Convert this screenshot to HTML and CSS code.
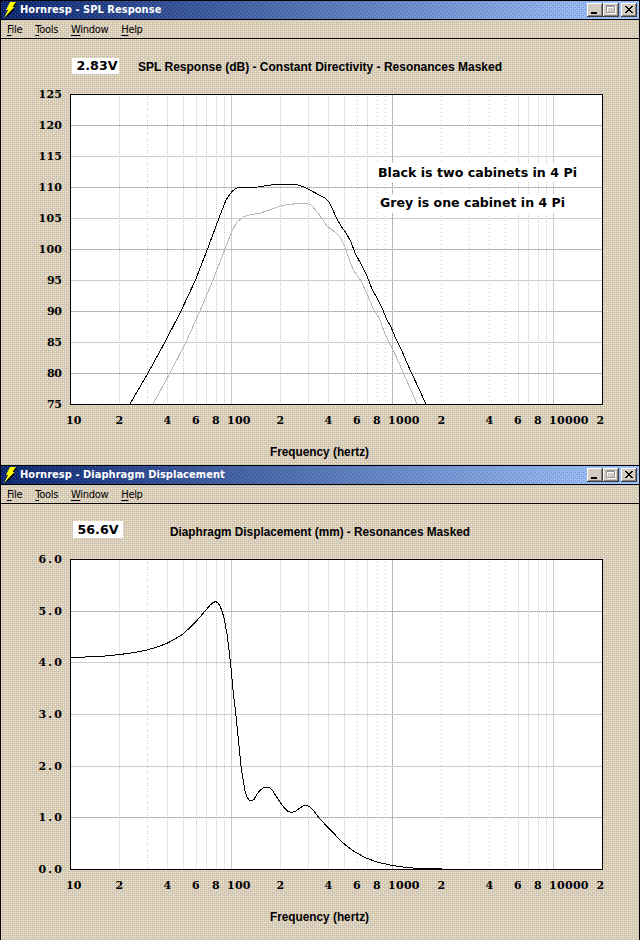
FILE: index.html
```html
<!DOCTYPE html>
<html lang="en">
<head>
    <meta charset="UTF-8">
    <title>Hornresp</title>
    <link rel="stylesheet" href="styles.css">
</head>
<body>
    <div class="window">
        <div class="titlebar">
            <svg class="bolt" width="14" height="16" viewBox="0 0 14 16">
                <path d="M7 1h6l-4 6h2L2 16l3-7H3z" fill="#000"/>
                <path d="M6 0h6L8.500 5h2L0 16l4-8H2z" fill="#ff0"/>
            </svg>
            <span class="caption">Hornresp - SPL Response</span>
            <div class="controls">
                <div class="btn"><svg width="16" height="14"><path d="M4 9h6v2H4z"/></svg></div>
                <div class="btn"><svg width="16" height="14"><path d="M4.5 3.5h8v7h-8zM5 4.5h7" fill="none" stroke="#fff"/><path d="M3.5 2.5h8v7h-8zM4 3.5h7" fill="none" stroke="#999"/></svg></div>
                <div class="btn close"><svg width="16" height="14"><path d="M4 3h2v1h1v1h2V4h1V3h2v1h-1v1h-1v1H9v1h1v1h1v1h1v1h-2V9H9V8H7v1H6v1H4V9h1V8h1V7h1V6H6V5H5V4H4z"/></svg></div>
            </div>
        </div>
        <div class="menu">
            <span><u>F</u>ile</span>
            <span><u>T</u>ools</span>
            <span><u>W</u>indow</span>
            <span><u>H</u>elp</span>
        </div>
        <svg class="chart" id="spl" width="638" height="426" viewBox="1 39 638 426"></svg>
    </div>

    <div class="window window-displacement">
        <div class="titlebar">
            <svg class="bolt" width="14" height="16" viewBox="0 0 14 16">
                <path d="M7 1h6l-4 6h2L2 16l3-7H3z" fill="#000"/>
                <path d="M6 0h6L8.500 5h2L0 16l4-8H2z" fill="#ff0"/>
            </svg>
            <span class="caption">Hornresp - Diaphragm Displacement</span>
            <div class="controls">
                <div class="btn"><svg width="16" height="14"><path d="M4 9h6v2H4z"/></svg></div>
                <div class="btn"><svg width="16" height="14"><path d="M4.5 3.5h8v7h-8zM5 4.5h7" fill="none" stroke="#fff"/><path d="M3.5 2.5h8v7h-8zM4 3.5h7" fill="none" stroke="#999"/></svg></div>
                <div class="btn close"><svg width="16" height="14"><path d="M4 3h2v1h1v1h2V4h1V3h2v1h-1v1h-1v1H9v1h1v1h1v1h1v1h-2V9H9V8H7v1H6v1H4V9h1V8h1V7h1V6H6V5H5V4H4z"/></svg></div>
            </div>
        </div>
        <div class="menu">
            <span><u>F</u>ile</span>
            <span><u>T</u>ools</span>
            <span><u>W</u>indow</span>
            <span><u>H</u>elp</span>
        </div>
        <svg class="chart" id="displacement" width="638" height="436" viewBox="1 39 638 436"></svg>
    </div>

    <script src="script.js"></script>
</body>
</html>
```
FILE: styles.css
```css
* {
    margin: 0;
    padding: 0;
    box-sizing: border-box;
}

body {
    width: 640px;
    height: 940px;
    overflow: hidden;
    background-color: #cccccc;
    font-family: 'DejaVu Sans Condensed', 'DejaVu Sans', sans-serif;
    color: #000;
}

/* 256 colour dither, 4x4 tile */
.window {
    height: 465px;
    border: 1px solid #000;
    border-bottom: none;
    background-color: #ccc6bc;
    background-image: url("data:image/svg+xml,%3Csvg xmlns='http://www.w3.org/2000/svg' width='4' height='4' shape-rendering='crispEdges'%3E%3Cpath d='M0 0h1v1H0zM2 2h1v1H2z' fill='%23ffff99'/%3E%3Cpath d='M2 0h1v1H2zM0 2h1v1H0z' fill='%23ffcccc'/%3E%3C/svg%3E");
}

.window-displacement {
    height: 475px;
}

.titlebar {
    display: flex;
    align-items: center;
    height: 19px;
    padding: 0 2px 0 3px;
    border-bottom: 1px solid #000;
    background:
        url("data:image/svg+xml,%3Csvg xmlns='http://www.w3.org/2000/svg' width='4' height='4' shape-rendering='crispEdges'%3E%3Cpath d='M0 0h1v1H0zM2 2h1v1H2z' fill='%23003366' fill-opacity='.3'/%3E%3Cpath d='M2 0h1v1H2zM0 2h1v1H0z' fill='%239999ff' fill-opacity='.3'/%3E%3C/svg%3E"),
        linear-gradient(to right, #0a246a, #a6caff);
}

.bolt {
    flex: none;
}

.caption {
    margin-left: 2px;
    color: #fff;
    font-size: 11px;
    font-weight: bold;
    line-height: 18px;
    letter-spacing: 0.04px;
    white-space: nowrap;
}

.controls {
    display: flex;
    margin-left: auto;
}

.btn {
    width: 16px;
    height: 14px;
    background: #d4ccc0;
    box-shadow: inset -1px -1px #404040, inset 1px 1px #fff, inset -2px -2px #808080;
}

.btn svg {
    display: block;
}

.close {
    margin-left: 2px;
}

.menu {
    display: flex;
    gap: 13px;
    height: 19px;
    padding-left: 6px;
    border-bottom: 1px solid #000;
    font-size: 11px;
    line-height: 19px;
    letter-spacing: -0.3px;
}

.menu u {
    text-underline-offset: 2px;
}

.chart {
    display: block;
}

.plot {
    fill: #fff;
    stroke: #000;
    shape-rendering: crispEdges;
}

.grid {
    stroke: #cccccc;
    shape-rendering: crispEdges;
}

.grid-dark {
    stroke: #a0a0a0;
    stroke-dasharray: 1 1;
    shape-rendering: crispEdges;
}

.curve {
    fill: none;
    stroke: #000;
    shape-rendering: crispEdges;
}

.curve-grey {
    stroke: #b8b8b8;
}

.box {
    fill: #fff;
}

.heading {
    font-family: 'Liberation Sans', Arial, sans-serif;
    font-size: 12px;
    font-weight: bold;
}

.tick {
    font-family: 'DejaVu Serif', serif;
    font-size: 11px;
    font-weight: bold;
}

.note {
    font-family: 'DejaVu Sans', Verdana, sans-serif;
    font-size: 13px;
    font-weight: bold;
}
```
FILE: script.js
```js
const LEFT = 70;
const RIGHT = 602;
const TOP = 94;
const BOTTOM = 404;
const DECADE = 161;

function line(x1, y1, x2, y2, cls, dash) {
    const d = dash ? ` stroke-dasharray="${dash}"` : '';
    return `<line class="${cls}" x1="${x1}" y1="${y1}" x2="${x2}" y2="${y2}"${d}/>`;
}

function text(x, y, width, cls, value) {
    const adjust = cls === 'tick' ? 'spacing' : 'spacingAndGlyphs';
    return `<text class="${cls}" x="${x}" y="${y}" textLength="${width}" lengthAdjust="${adjust}">${value}</text>`;
}

function drawGrid(rows) {
    let out = `<rect class="plot" x="${LEFT + 0.5}" y="${TOP + 0.5}" width="${RIGHT - LEFT}" height="${BOTTOM - TOP}"/>`;

    // log frequency lines
    for (let decade = 0; decade < 4; decade++) {
        for (let n = 1; n < 10; n++) {
            const x = Math.round(LEFT + 0.35 + DECADE * (decade + Math.log10(n)));
            if (x <= LEFT || x >= RIGHT) continue;
            if (n === 1) {
                out += line(x + 0.5, TOP + 1, x + 0.5, BOTTOM, 'grid');
                if (x % 2 === 0) out += line(x + 0.5, TOP + 1, x + 0.5, BOTTOM, 'grid-dark');
            } else {
                let dash = x % 4 === 1 && x > 300 ? '1 3' : '1 1';
                if (x === 147) dash = '1 1 1 3';
                out += line(x + 0.5, TOP + 2, x + 0.5, BOTTOM, 'grid', dash);
            }
        }
    }

    for (let i = 1; i < rows.count; i++) {
        const y = Math.round(TOP + (BOTTOM - TOP) * i / rows.count);
        out += line(LEFT + 1, y + 0.5, RIGHT, y + 0.5, 'grid');
        if (rows.dark.includes(i)) out += line(LEFT + 1, y + 0.5, RIGHT, y + 0.5, 'grid-dark');
    }

    for (let i = 0; i <= rows.count; i++) {
        const y = Math.round(TOP + (BOTTOM - TOP) * i / rows.count);
        const label = rows.label(i);
        const width = label.length === 2 ? 15 : 23.5;
        out += text(62 - width, y + 4, width, 'tick', label);
    }

    const ticks = [
        [66, '10'], [115.5, '2'], [163.5, '4'], [192, '6'], [212, '8'], [227, '100'],
        [276.5, '2'], [324.5, '4'], [353, '6'], [373, '8'], [388, '1000'],
        [437.5, '2'], [485.5, '4'], [514, '6'], [534, '8'], [549, '10000'], [596.5, '2']
    ];
    ticks.forEach(([x, label]) => {
        out += text(x, 424, label.length * 8 - 0.5, 'tick', label);
    });
    return out + text(270, 456, 99, 'heading', 'Frequency (hertz)');
}

function curve(points, cls) {
    return `<polyline class="${cls}" points="${points}"/>`;
}

const twoCabinets = '130,404 148,373 165,342 181,311 195.5,280 207.5,249 219,218 226,200 231.5,192 235,189 238,187.5 258,187 267,185.5 275,184.6 292,184.6 298,185 303,186.5 310,190 319,195 325,198 329,202 332,208 337,219 341,226 346,233 351,242 355,253 362,266 367,276 372,289 378,300 383,310 386,318 391,327 396,339 402,351 407,363 412,374 419,389 426,404';
const oneCabinet = '153,404 170,373 186,342 200,311 213,280 225,249 231.5,232 237,222 243,217 250,214.6 260,213.3 273,208.5 285,205 297,203.6 307,203.6 311,205 318,213 327,226 335,232 340,237 345,247 350,262 354,271 361,281 367,294 373,308 380,320 385,334 392,348 399,363 405,377 411,390 417,404';
const displacement = '71,192.5 85,192 105,191 119,189.6 135,187.5 147,185 158,181.8 168,177.8 175,174 183,169 190,162.5 197,155.5 205,146 210,140.3 213,137.5 216,136.5 218,138 220,141 222,146 224,153 227,169 229,185 231,203 233,225 236,251 238,271 241,301 243,314 245,326 247,332 249,335 251,335.8 254,334.5 257,329 260,325.5 263,323 267,322.3 270,323 273,326 276,331 280,337 284,342.5 288,346.5 292,347.5 296,346 300,343 303,340.8 307,340.5 310,342 314,346 320,354 328,362.5 334,368.5 339,374 346,380.5 355,387 366,393 377,397 392,400.5 405,402.3 416,403.3 442,403.5';

document.getElementById('spl').innerHTML =
    drawGrid({ count: 10, dark: [1, 3, 5, 7, 9], label: i => String(125 - i * 5) }) +
    curve(oneCabinet, 'curve curve-grey') +
    curve(twoCabinets, 'curve') +
    '<rect class="box" x="72" y="58" width="47" height="16"/>' +
    text(76.5, 70, 41, 'note', '2.83V') +
    text(138, 71, 364, 'heading', 'SPL Response (dB) - Constant Directivity - Resonances Masked') +
    '<rect class="box" x="376" y="163" width="204" height="19"/>' +
    text(378, 177, 199, 'note', 'Black is two cabinets in 4 Pi') +
    '<rect class="box" x="378" y="194" width="190" height="19"/>' +
    text(380, 207, 185, 'note', 'Grey is one cabinet in 4 Pi');

document.getElementById('displacement').innerHTML =
    drawGrid({ count: 6, dark: [1, 5], label: i => (6 - i).toFixed(1) }) +
    curve(displacement, 'curve') +
    '<rect class="box" x="73" y="56" width="50" height="17"/>' +
    text(77.5, 69, 41, 'note', '56.6V') +
    text(170, 71, 300, 'heading', 'Diaphragm Displacement (mm) - Resonances Masked');
```
